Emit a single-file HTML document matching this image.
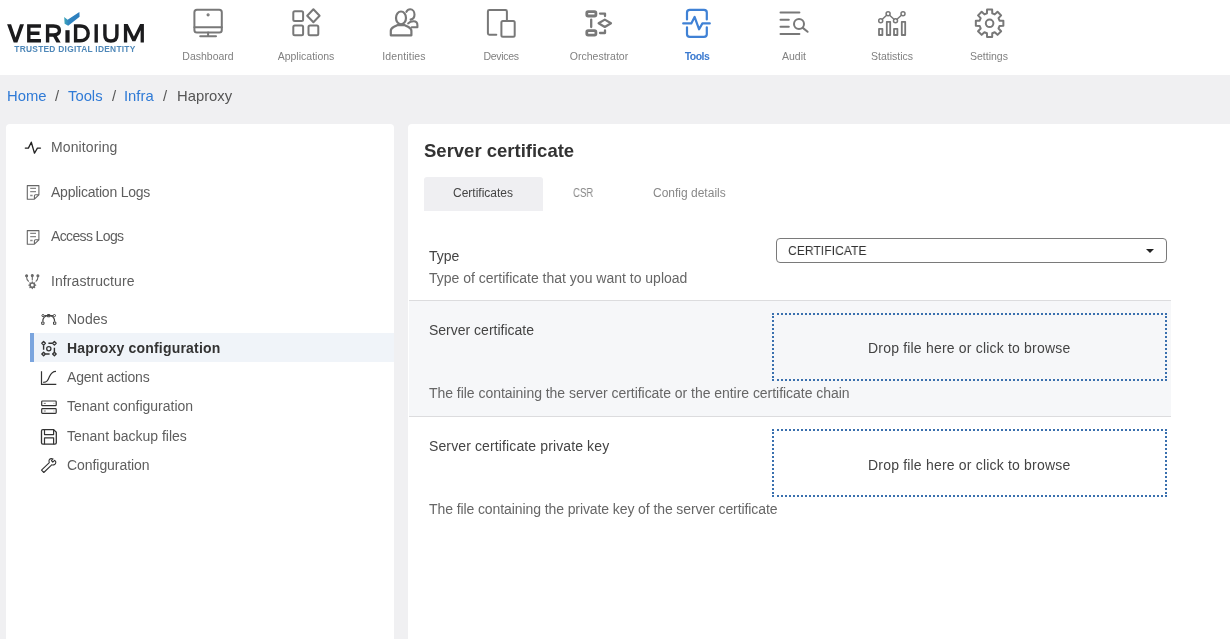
<!DOCTYPE html>
<html><head><meta charset="utf-8">
<style>
*{margin:0;padding:0;box-sizing:border-box}
html,body{width:1230px;height:639px;overflow:hidden}
body{background:#f0f0f2;font-family:"Liberation Sans",sans-serif;position:relative}
.t{position:absolute;line-height:1;white-space:nowrap;will-change:transform}
#hdr{position:absolute;left:0;top:0;width:1230px;height:75px;background:#fff}
.nl{will-change:transform;position:absolute;font-size:10.5px;color:#808080;line-height:1;white-space:nowrap;transform:translateX(-50%);top:51px}
svg{position:absolute;overflow:visible}
#side{position:absolute;left:6px;top:124px;width:388px;height:560px;background:#fff;border-radius:4px}
#main{position:absolute;left:408px;top:124px;width:900px;height:560px;background:#fff;border-radius:4px}
.bc{font-size:14.8px;color:#555;top:89.1px}
.si{font-size:14px;color:#5e5e5e}
.ic{stroke:#333;fill:none;stroke-width:1.2}
.lbl{font-size:14px;color:#444}
.dsc{font-size:14px;color:#666}
.drop{position:absolute;left:772px;width:395px;border:2px dotted #3a70ae}
</style></head><body>
<div id="hdr">
  <!-- logo -->

  <!-- nav -->
  <div class="nl" style="left:208px">Dashboard</div>
  <div class="nl" style="left:305.5px">Applications</div>
  <div class="nl" style="left:403.5px;letter-spacing:0.15px">Identities</div>
  <div class="nl" style="left:501.3px;letter-spacing:-0.3px">Devices</div>
  <div class="nl" style="left:598.7px">Orchestrator</div>
  <div class="nl" style="left:696.7px;color:#3b7ad0;font-weight:bold;letter-spacing:-0.5px">Tools</div>
  <div class="nl" style="left:794.1px">Audit</div>
  <div class="nl" style="left:891.5px">Statistics</div>
  <div class="nl" style="left:989.4px">Settings</div>
</div>

<!-- breadcrumb -->
<div class="t bc" style="left:7px;color:#2f7ad6">Home</div>
<div class="t bc" style="left:55px">/</div>
<div class="t bc" style="left:67.5px;color:#2f7ad6">Tools</div>
<div class="t bc" style="left:111.5px">/</div>
<div class="t bc" style="left:124px;color:#2f7ad6">Infra</div>
<div class="t bc" style="left:162.5px">/</div>
<div class="t bc" style="left:176.5px">Haproxy</div>

<div id="side"></div>
<div id="main"></div>

<!-- sidebar items -->
<div class="t si" style="left:51px;top:139.7px;letter-spacing:0.111px">Monitoring</div>
<div class="t si" style="left:51px;top:184.5px;letter-spacing:-0.227px">Application Logs</div>
<div class="t si" style="left:51px;top:229.3px;letter-spacing:-0.630px">Access Logs</div>
<div class="t si" style="left:51px;top:274.4px;letter-spacing:0.077px">Infrastructure</div>

<div style="position:absolute;left:30px;top:333px;width:364px;height:29px;background:#f0f4f9"></div>
<div style="position:absolute;left:30px;top:333px;width:4px;height:29px;background:#7ba5de"></div>

<div class="t si" style="left:66.5px;top:311.5px">Nodes</div>
<div class="t si" style="left:66.5px;top:340.8px;font-weight:bold;color:#333;letter-spacing:0.200px">Haproxy configuration</div>
<div class="t si" style="left:66.5px;top:370px;letter-spacing:-0.183px">Agent actions</div>
<div class="t si" style="left:66.5px;top:399.2px">Tenant configuration</div>
<div class="t si" style="left:66.5px;top:428.5px">Tenant backup files</div>
<div class="t si" style="left:66.5px;top:457.8px;letter-spacing:-0.058px">Configuration</div>

<!-- main -->
<div class="t" style="left:424px;top:141.9px;font-size:18.5px;font-weight:bold;color:#333">Server certificate</div>
<div style="position:absolute;left:424px;top:177px;width:119px;height:34px;background:#efeff2;border-radius:3px 3px 0 0"></div>
<div class="t" style="left:453px;top:187px;font-size:12px;color:#444">Certificates</div>
<div class="t" style="left:573.4px;top:187px;font-size:12px;color:#888;transform:scaleX(0.8);transform-origin:0 0">CSR</div>
<div class="t" style="left:653px;top:187px;font-size:12px;color:#888">Config details</div>

<div class="t lbl" style="left:429px;top:248.6px">Type</div>
<div class="t dsc" style="left:429px;top:270.5px">Type of certificate that you want to upload</div>
<div style="position:absolute;left:776px;top:238px;width:391px;height:25px;border:1px solid #7a7a7a;border-radius:4px;background:#fff"></div>
<div class="t" style="left:788.3px;top:244.2px;font-size:13.5px;color:#333;transform:scaleX(0.9);transform-origin:0 0">CERTIFICATE</div>
<div style="position:absolute;left:1146px;top:249px;width:0;height:0;border-left:4px solid transparent;border-right:4px solid transparent;border-top:4px solid #222"></div>

<div style="position:absolute;left:409px;top:300px;width:762px;height:117px;background:#f6f7f9;border-top:1px solid #dcdcde;border-bottom:1px solid #dcdcde"></div>
<div class="t lbl" style="left:429px;top:323.2px">Server certificate</div>
<div class="drop" style="top:313px;height:68px"></div>
<div class="t lbl" style="left:868px;top:341.4px;letter-spacing:0.191px">Drop file here or click to browse</div>
<div class="t dsc" style="left:429px;top:386.4px;letter-spacing:-0.038px">The file containing the server certificate or the entire certificate chain</div>

<div class="t lbl" style="left:429px;top:439.4px;letter-spacing:0.121px">Server certificate private key</div>
<div class="drop" style="top:429px;height:68px"></div>
<div class="t lbl" style="left:868px;top:457.6px;letter-spacing:0.191px">Drop file here or click to browse</div>
<div class="t dsc" style="left:429px;top:502.2px;letter-spacing:-0.093px">The file containing the private key of the server certificate</div>


<svg id="ov" width="1230" height="639" viewBox="0 0 1230 639" style="left:0;top:0;pointer-events:none">
<!-- LOGO -->
<g fill="none" stroke="#1b1b1d" stroke-width="3.4" stroke-linejoin="miter">
  
  <path d="M41 26 H28.8 V40.8 H41 M28.8 33.3 H39.5"/>
  <path d="M47.6 42.6 V26 H53.5 C57.5 26 59.4 28 59.4 30.6 C59.4 33.3 57.5 35 53.5 35 H47.6"/>
  <polygon points="52.6,35.5 56.6,35.5 60.6,42.6 56.4,42.6" fill="#1b1b1d" stroke="none"/>
  <path d="M67.5 30.2 V42.6" stroke-width="4.2"/>
  <path d="M75.6 42.6 V26 H80 C86 26 88.2 29.8 88.2 33.3 C88.2 37 86 40.8 80 40.8 H75.6"/>
  <path d="M96.2 24.2 V42.6"/>
  <path d="M104.9 24.2 V35 C104.9 39.3 107.4 41 110.9 41 C114.4 41 116.9 39.3 116.9 35 V24.2"/>
  
</g>
<polygon points="7.1,24.2 11.1,24.2 15.55,37.6 20,24.2 24,24.2 17.4,42.6 13.7,42.6" fill="#1b1b1d"/>
<polygon points="123.9,42.6 123.9,24.1 127.7,24.1 133.9,36.4 140.1,24.1 143.9,24.1 143.9,42.6 140.6,42.6 140.6,30.2 135.4,41.2 132.4,41.2 127.2,30.2 127.2,42.6" fill="#1b1b1d"/>
<defs><linearGradient id="chk" x1="64" y1="0" x2="80" y2="0" gradientUnits="userSpaceOnUse"><stop offset="0" stop-color="#3fa9b9"/><stop offset="0.3" stop-color="#2f85c0"/><stop offset="1" stop-color="#2c7dbd"/></linearGradient></defs>
<polygon points="64.2,17 67.6,19.7 79.4,12.1 79.6,16.8 68.2,25.7 64.6,23.8" fill="url(#chk)"/>
<text x="14.3" y="51.9" font-family="Liberation Sans" font-weight="bold" font-size="8.4" fill="#4f88b9" textLength="121" lengthAdjust="spacing">TRUSTED DIGITAL IDENTITY</text>


<!-- SIDEBAR ICONS -->
<g fill="none" stroke="#222" stroke-width="1.3" stroke-linecap="round" stroke-linejoin="round">
  <path d="M25.3 148.1 H28.4 L31.3 142.2 L34.5 153.2 L37.4 148.1 H40.5"/>
</g>
<g fill="none" stroke="#666" stroke-width="1.1" stroke-linejoin="round">
  <path d="M27.3 185.6 H38.9 V194.8 L34.4 199.2 H27.3 Z M38.9 194.8 H35.5 Q34.4 194.8 34.4 195.9 V199.2"/>
  <path d="M30.2 188.3 H36 M30.2 191.7 H36 M30.2 195.5 H32.6" stroke="#888" stroke-width="1.3"/>
  <path d="M27.3 230.6 H38.9 V239.8 L34.4 244.2 H27.3 Z M38.9 239.8 H35.5 Q34.4 239.8 34.4 240.9 V244.2"/>
  <path d="M30.2 233.3 H36 M30.2 236.7 H36 M30.2 240.5 H32.6" stroke="#888" stroke-width="1.3"/>
</g>
<g fill="none" stroke="#6a6a6a" stroke-width="1.1" stroke-linecap="round">
  <circle cx="26.6" cy="275.8" r="1" fill="#6a6a6a"/>
  <circle cx="32.3" cy="275.6" r="1" fill="#6a6a6a"/>
  <circle cx="37.9" cy="275.8" r="1" fill="#6a6a6a"/>
  <path d="M26.6 277 Q26.6 280 28.5 281.2 M32.3 277 V280 M37.9 277 Q37.9 280 36 281.2"/>
  <circle cx="32.3" cy="285.2" r="2.2" stroke-width="1.6"/>
  <path d="M32.3 281.8 V282.6 M32.3 287.8 V288.6 M28.9 285.2 H29.7 M34.9 285.2 H35.7 M29.9 282.8 L30.4 283.3 M34.2 287.1 L34.7 287.6 M34.7 282.8 L34.2 283.3 M30.4 287.1 L29.9 287.6" stroke-width="1.2"/>
</g>
<g fill="none" stroke="#333" stroke-width="1.1" stroke-linejoin="round">
  <!-- nodes -->
  <path d="M42.8 321.6 C42.8 317.2 45.2 315.6 48.7 315.6 C52.2 315.6 54.6 317.2 54.6 321.6" stroke="#444" stroke-width="1.2"/>
  <path d="M44.4 315.6 H53" stroke="#444" stroke-width="1.1"/>
  <rect x="41.7" y="322" width="2.3" height="2.3" stroke="#444" stroke-width="1"/>
  <rect x="53.5" y="322" width="2.3" height="2.3" stroke="#444" stroke-width="1"/>
  <rect x="47.5" y="314.5" width="2.3" height="2.3" stroke="#444" stroke-width="1"/>
  <circle cx="43" cy="315.6" r="1.1" stroke="#444" stroke-width="1"/>
  <circle cx="54.4" cy="315.6" r="1.1" stroke="#444" stroke-width="1"/>
  <!-- haproxy -->
  <path d="M43.6 341.5 L45.4 343.3 L43.6 345.1 L41.8 343.3 Z" stroke-width="1.3"/>
  <path d="M54.4 341.5 L56.2 343.3 L54.4 345.1 L52.6 343.3 Z" stroke-width="1.3"/>
  <path d="M43.6 352.2 L45.4 354 L43.6 355.8 L41.8 354 Z" stroke-width="1.3"/>
  <path d="M54.4 352.2 L56.2 354 L54.4 355.8 L52.6 354 Z" stroke-width="1.3"/>
  <circle cx="48.8" cy="348.7" r="2.1" stroke-width="1.3"/>
  <path d="M43.6 345.3 V349.8 M48.4 343.3 H52.4 M45.5 354 H49.6 M54.4 347.8 V352.1" stroke-width="1.4"/>
  <!-- agent actions -->
  <path d="M41.5 371.3 V384.4 H56.3" stroke-width="1.2"/>
  <path d="M43.2 382.3 C47.5 382 48 380 49.5 376.5 C51 373 53 371.3 56 371.3" stroke-width="1.2"/>
  <!-- tenant config -->
  <rect x="41.7" y="401" width="14.5" height="4.7" rx="0.8" stroke-width="1.2"/>
  <rect x="41.7" y="408.6" width="14.5" height="4.7" rx="0.8" stroke-width="1.2"/>
  <path d="M43.8 403.4 H45.8 M43.8 411 H45.8 M53.6 403.4 H54.3 M53.6 411 H54.3" stroke="#666" stroke-width="0.9"/>
  <!-- backup floppy -->
  <path d="M42.8 429.6 H53.6 L56.3 432.3 V442.8 Q56.3 444.2 54.9 444.2 H42.8 Q41.5 444.2 41.5 442.8 V431 Q41.5 429.6 42.8 429.6 Z" stroke-width="1.3"/>
  <path d="M44.5 429.6 V434.6 H53.6 V429.6 M44.5 444.2 V437.8 H53.6 V444.2" stroke-width="1.2"/>
  <!-- wrench -->
  <path transform="translate(0,1)" d="M41.5 469.2 L49.3 461.6 C48.4 459.5 49.4 457.6 51.6 457.6 C52.2 457.6 52.8 457.8 53.1 457.9 L51.4 459.6 L52.8 461.1 L54.6 459.4 C55 460 55.8 460.5 55.8 461.2 C55.8 463.4 53.8 464.5 51.7 463.8 L43.8 471.5 Z" stroke-width="1.1"/>
</g>

<!-- NAV ICONS -->
<g fill="none" stroke="#787878" stroke-width="2" stroke-linecap="round" stroke-linejoin="round">
  <!-- dashboard -->
  <rect x="194.4" y="9.8" width="27.4" height="22.6" rx="2.5"/>
  <path d="M194.4 27.2 H221.8 M208.1 32.4 V36.2 M200.2 36.3 H216"/>
  <circle cx="208.1" cy="14.8" r="0.6" fill="#787878"/>
  <!-- applications -->
  <rect x="293.3" y="11.2" width="9.8" height="9.8" rx="1.5"/>
  <rect x="293.3" y="25.5" width="9.8" height="9.8" rx="1.5"/>
  <rect x="308.5" y="25.5" width="9.8" height="9.8" rx="1.5"/>
  <path d="M313.4 9.3 L319.6 15.8 L313.4 22.3 L307.2 15.8 Z"/>
  <!-- identities -->
  <ellipse cx="401" cy="17.9" rx="5" ry="6.4" stroke-width="2.2"/>
  <path d="M390.8 35.3 V30.8 C390.8 28.8 392 27.8 394 26.8 L397.2 25.2 H404.8 L408 26.8 C410 27.8 411.4 28.8 411.4 30.8 V35.3 Z" stroke-width="2.2"/>
  <path d="M406.4 11.8 C407.2 10.2 408.6 9.3 410.2 9.3 C412.7 9.3 414.5 11.7 414.5 14.6 C414.5 17.3 412.9 19.3 410.6 19.6" stroke-width="2.1"/>
  <path d="M408.2 23.4 C409.6 21.9 411.2 21.3 413.6 21.3 C416.2 21.3 417.4 23 417.4 25.2 V27.3 H411.8" stroke-width="2.1"/>
  <!-- devices -->
  <path d="M496.3 34.7 H489.3 C488.3 34.7 487.9 34.3 487.9 33.3 V11.4 C487.9 10.4 488.3 10 489.3 10 H505.5 C506.5 10 506.9 10.4 506.9 11.4 V20.8"/>
  <rect x="501.4" y="21" width="13.3" height="15.8" rx="1.5"/>
  <!-- orchestrator -->
  <rect x="586.8" y="11.6" width="9.1" height="4.4" rx="1.3" stroke-width="2.8"/>
  <rect x="586.8" y="30.7" width="9.1" height="4.4" rx="1.3" stroke-width="2.8"/>
  <path d="M591.2 19.6 V27 M600 13.6 H605 V16 M600 33 H605 V30.4" stroke-width="2.3"/>
  <path d="M604.8 19.6 L611 23.3 L604.8 27 L598.6 23.3 Z" stroke-width="2.2"/>
  <!-- audit -->
  <path d="M780.5 12.4 H799.4 M780.5 19.8 H788.8 M780.5 26.7 H788.8 M780.5 34.1 H799.4"/>
  <circle cx="799" cy="24" r="5"/>
  <path d="M802.8 27.9 L807.6 31.8"/>
  <!-- statistics -->
  <rect x="879" y="28.8" width="3.4" height="6.2" stroke-width="1.8"/>
  <rect x="886.8" y="21.8" width="3.4" height="13.2" stroke-width="1.8"/>
  <rect x="894" y="28.8" width="3.4" height="6.2" stroke-width="1.8"/>
  <rect x="901.8" y="21.8" width="3.4" height="13.2" stroke-width="1.8"/>
  <path d="M882.3 19.3 L886.6 15.2 M889.6 15.2 L894 19.3 M897 19.3 L901.4 15.2" stroke-width="1.5"/>
  <circle cx="880.7" cy="20.8" r="2" stroke-width="1.5"/>
  <circle cx="888.1" cy="13.7" r="2" stroke-width="1.5"/>
  <circle cx="895.5" cy="20.8" r="2" stroke-width="1.5"/>
  <circle cx="903" cy="13.7" r="2" stroke-width="1.5"/>
</g>
<!-- settings gear -->
<g fill="none" stroke="#787878" stroke-width="2" stroke-linejoin="round">
  <path id="gear" d="M986.93 13.35 L987.05 9.53 L992.15 9.53 L992.27 13.35 L994.75 14.38 L997.53 11.76 L1001.14 15.37 L998.52 18.15 L999.55 20.63 L1003.37 20.75 L1003.37 25.85 L999.55 25.97 L998.52 28.45 L1001.14 31.23 L997.53 34.84 L994.75 32.22 L992.27 33.25 L992.15 37.07 L987.05 37.07 L986.93 33.25 L984.45 32.22 L981.67 34.84 L978.06 31.23 L980.68 28.45 L979.65 25.97 L975.83 25.85 L975.83 20.75 L979.65 20.63 L980.68 18.15 L978.06 15.37 L981.67 11.76 L984.45 14.38 Z"/>
  <circle cx="989.6" cy="23.3" r="3.8"/>
</g>
<!-- tools -->
<g fill="none" stroke="#3f81d5" stroke-width="2.2" stroke-linecap="round" stroke-linejoin="round">
  <path d="M687 19.5 V12.5 C687 10.6 688 9.9 689.8 9.9 H704 C705.8 9.9 706.8 10.6 706.8 12.5 V19.5 M687 27.3 V34.3 C687 36.2 688 36.8 689.8 36.8 H704 C705.8 36.8 706.8 36.2 706.8 34.3 V27.3"/>
  <path d="M683.2 23.4 H691.3 L694.6 16.9 L699.1 29.3 L702.4 23.4 H709.8"/>
</g>
</svg>
</body></html>
